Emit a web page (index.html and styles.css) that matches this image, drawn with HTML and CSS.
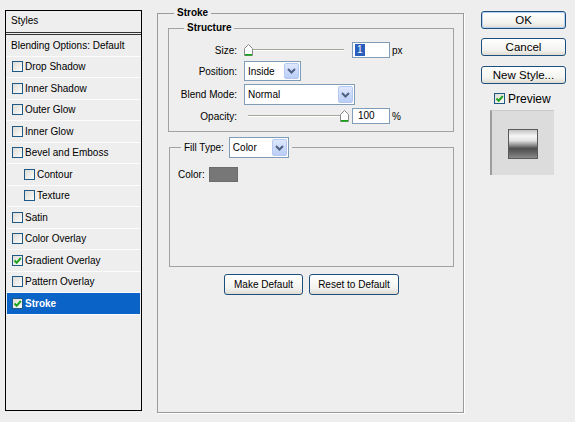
FILE: index.html
```html
<!DOCTYPE html>
<html>
<head>
<meta charset="utf-8">
<title>Layer Style - Stroke</title>
<link rel="stylesheet" href="styles.css">
</head>
<body>
<div class="dialog">
  <div class="styles-list">
    <div class="list-head">Styles</div>
    <div class="row">Blending Options: Default</div>
    <div class="row"><span class="cb"></span>Drop Shadow</div>
    <div class="row"><span class="cb"></span>Inner Shadow</div>
    <div class="row"><span class="cb"></span>Outer Glow</div>
    <div class="row"><span class="cb"></span>Inner Glow</div>
    <div class="row"><span class="cb"></span>Bevel and Emboss</div>
    <div class="row sub"><span class="cb"></span>Contour</div>
    <div class="row sub"><span class="cb"></span>Texture</div>
    <div class="row"><span class="cb"></span>Satin</div>
    <div class="row"><span class="cb"></span>Color Overlay</div>
    <div class="row"><span class="cb on"><svg viewBox="0 0 9 9" width="9" height="9"><path d="M1.5 4.5 L3.7 6.8 L7.8 2" fill="none" stroke="#1fa31f" stroke-width="2"/></svg></span>Gradient Overlay</div>
    <div class="row"><span class="cb"></span>Pattern Overlay</div>
    <div class="row sel"><span class="cb on"><svg viewBox="0 0 9 9" width="9" height="9"><path d="M1.5 4.5 L3.7 6.8 L7.8 2" fill="none" stroke="#1fa31f" stroke-width="2"/></svg></span>Stroke</div>
  </div>

  <fieldset class="group main">
    <legend class="main-legend">Stroke</legend>
    <div class="main-body">
      <fieldset class="group structure">
        <legend class="sub-legend">Structure</legend>
        <div class="form">
          <span class="lbl">Size:</span>
          <div class="ctl">
            <div class="slider">
              <span class="track"></span>
              <svg class="thumb at-min" viewBox="0 0 9 12" width="9" height="12"><path d="M4.5 0.5 L8.5 4.5 L8.5 11.5 L0.5 11.5 L0.5 4.5 Z" fill="#fff" stroke="#8a8a8a"/><path d="M1 10.8 H8" stroke="#17a317" stroke-width="1.6"/></svg>
            </div>
            <span class="field"><span class="hl">1</span></span>
            <span class="unit">px</span>
          </div>

          <span class="lbl">Position:</span>
          <div class="ctl">
            <span class="select pos"><span class="val">Inside</span><span class="drop"><svg viewBox="0 0 9 6" width="9" height="6"><path d="M1 1 L4.5 4.5 L8 1" fill="none" stroke="#4d6185" stroke-width="2"/></svg></span></span>
          </div>

          <span class="lbl">Blend Mode:</span>
          <div class="ctl">
            <span class="select blend"><span class="val">Normal</span><span class="drop"><svg viewBox="0 0 9 6" width="9" height="6"><path d="M1 1 L4.5 4.5 L8 1" fill="none" stroke="#4d6185" stroke-width="2"/></svg></span></span>
          </div>

          <span class="lbl">Opacity:</span>
          <div class="ctl">
            <div class="slider">
              <span class="track"></span>
              <svg class="thumb at-max" viewBox="0 0 9 12" width="9" height="12"><path d="M4.5 0.5 L8.5 4.5 L8.5 11.5 L0.5 11.5 L0.5 4.5 Z" fill="#fff" stroke="#8a8a8a"/><path d="M1 10.8 H8" stroke="#17a317" stroke-width="1.6"/></svg>
            </div>
            <span class="field">100</span>
            <span class="unit">%</span>
          </div>
        </div>
      </fieldset>

      <fieldset class="group fill">
        <legend class="fill-legend"><span class="fill-lbl">Fill Type:</span><span class="select ftype"><span class="val">Color</span><span class="drop"><svg viewBox="0 0 9 6" width="9" height="6"><path d="M1 1 L4.5 4.5 L8 1" fill="none" stroke="#4d6185" stroke-width="2"/></svg></span></span></legend>
        <div class="color-row"><span>Color:</span><span class="swatch"></span></div>
      </fieldset>

      <div class="actions">
        <button class="btn small">Make Default</button>
        <button class="btn small">Reset to Default</button>
      </div>
    </div>
  </fieldset>

  <div class="side">
    <button class="btn big default">OK</button>
    <button class="btn big">Cancel</button>
    <button class="btn big">New Style...</button>
    <div class="preview-check"><span class="cb on"><svg viewBox="0 0 9 9" width="9" height="9"><path d="M1.5 4.5 L3.7 6.8 L7.8 2" fill="none" stroke="#1fa31f" stroke-width="2"/></svg></span>Preview</div>
    <div class="preview-box"><span class="preview-swatch"></span></div>
  </div>
</div>
</body>
</html>
```

FILE: styles.css
```css
* { box-sizing: border-box; }

html, body {
  margin: 0;
  padding: 0;
  background: #eeeeee;
  font-family: "Liberation Sans", Arial, sans-serif;
  font-size: 10px;
  color: #000;
}

.dialog {
  display: flex;
  align-items: flex-start;
  width: 575px;
  height: 422px;
}

/* ---------- left list ---------- */
.styles-list {
  margin: 10px 0 0 5px;
  width: 137px;
  height: 401px;
  border: 1px solid #000;
  background: #eeeeee;
  display: flex;
  flex-direction: column;
}

.list-head {
  height: 24px;
  padding: 1px 0 3px 5px;
  display: flex;
  align-items: center;
  border-bottom: 3px double #333;
}

.row {
  height: 21.5px;
  flex: none;
  display: flex;
  align-items: center;
  padding-left: 5px;
  border-bottom: 1px solid #fbfbfb;
  white-space: nowrap;
}

.row .cb { margin: 0 2px 0 1px; }
.row.sub .cb { margin-left: 13px; }

.row.sel {
  background: #0a64c8;
  color: #fff;
  font-weight: bold;
  margin: 0 1px;
  padding-left: 4px;
}

.cb {
  width: 11px;
  height: 11px;
  flex: none;
  border: 1px solid #1f5a86;
  background: linear-gradient(135deg, #dedcd6, #fbfbf9);
  display: inline-flex;
  align-items: center;
  justify-content: center;
}
.cb svg { display: block; }

/* ---------- group boxes ---------- */
.group {
  margin: 0;
  padding: 0;
  border: 1px solid #a2a2a2;
  min-width: 0;
}

.main {
  margin: 7px 0 0 15px;
  width: 307px;
  height: 406px;
  border-color: #9a9a9a;
  box-shadow: 1px 1px 0 #ffffff;
}

.main-legend,
.sub-legend {
  padding: 0 3px;
  font-weight: bold;
  line-height: 12px;
  font-size: 10px;
}
.main-legend { margin-left: 16px; }
.sub-legend { margin-left: 15px; }

.main-body {
  padding: 3px 9px 0 10px;
}

.structure {
  height: 110px;
}

.form {
  display: grid;
  grid-template-columns: 68px 1fr;
  grid-template-rows: 16px 20px 21px 16px;
  column-gap: 7px;
  row-gap: 3px;
  padding-top: 8px;
}

.lbl {
  text-align: right;
  align-self: center;
  white-space: nowrap;
}

.ctl {
  display: flex;
  align-items: center;
}

.slider {
  position: relative;
  width: 106px;
  height: 16px;
  flex: none;
}
.track {
  position: absolute;
  left: 4px;
  right: 6px;
  top: 7px;
  height: 2px;
  border-top: 1px solid #a7a69c;
  border-bottom: 1px solid #ffffff;
}
.thumb {
  position: absolute;
  top: 2px;
}
.thumb.at-min { left: 0; }
.thumb.at-max { left: 96px; }

.field {
  margin-left: 2px;
  width: 38px;
  height: 16px;
  border: 1px solid #7f9db9;
  background: #fff;
  padding-left: 5px;
  display: flex;
  align-items: center;
  line-height: 12px;
}
.hl {
  background: #2a5fbd;
  color: #fff;
  padding: 0 2px;
  margin-left: -3px;
}
.unit { margin-left: 2px; }

.select {
  height: 100%;
  display: flex;
  align-items: center;
  justify-content: space-between;
  border: 1px solid #7f9db9;
  background: #fff;
  padding: 1px 1px 1px 3px;
}
.select.pos { width: 57px; height: 20px; }
.select.blend { width: 111px; height: 21px; }
.select.ftype { width: 60px; height: 21px; font-size: 10px; font-weight: normal; }

.drop {
  width: 15px;
  height: 100%;
  border: 1px solid #b5c8f2;
  border-radius: 2px;
  background: linear-gradient(#dfe8fd, #b9cdf6);
  display: flex;
  align-items: center;
  justify-content: center;
}
.drop svg { display: block; }

.fill {
  margin-top: 5px;
  margin-left: 1px;
  height: 130px;
}
.fill-legend {
  margin-left: 11px;
  padding: 0 3px;
  display: flex;
  align-items: center;
  height: 21px;
}
.fill-lbl { margin-right: 5px; }

.color-row {
  display: flex;
  align-items: center;
  gap: 4px;
  padding: 9px 0 0 8px;
}
.swatch {
  width: 29px;
  height: 15px;
  background: #777777;
  border: 1px solid #6c6c6c;
}

.actions {
  display: flex;
  justify-content: center;
  gap: 6px;
  margin-top: 7px;
  padding-left: 1px;
}

/* ---------- buttons ---------- */
.btn {
  font-family: "Liberation Sans", Arial, sans-serif;
  color: #000;
  border: 1px solid #1d4f7e;
  border-radius: 3px;
  background: linear-gradient(#ffffff, #f2f2ee 70%, #dedbd2);
  padding: 0;
  margin: 0;
  cursor: default;
  white-space: nowrap;
}
.btn.small {
  height: 21px;
  font-size: 10px;
  padding: 0;
}
.btn.small:first-child { width: 79px; }
.btn.small:last-child { width: 90px; }

.side {
  margin: 11px 0 0 17px;
  width: 85px;
  display: flex;
  flex-direction: column;
  align-items: flex-start;
}
.btn.big {
  width: 85px;
  height: 18px;
  font-size: 11.5px;
  line-height: 14px;
  margin-bottom: 9px;
}
.btn.big:nth-child(2) { margin-bottom: 10px; }
.btn.default {
  box-shadow: inset 0 0 0 1px #b8d0f2;
}

.preview-check {
  margin: -1px 0 0 13px;
  display: flex;
  align-items: center;
  gap: 3px;
  font-size: 12px;
  height: 13px;
}

.preview-box {
  margin: 5px 0 0 9px;
  width: 64px;
  height: 65px;
  background: #dcdcdc;
  border-left: 2px solid #9d9d9d;
  border-top: 1px solid #c9c9c9;
  display: flex;
  align-items: center;
  justify-content: center;
  padding-top: 2px;
}
.preview-swatch {
  width: 30px;
  height: 30px;
  border: 1px solid #5a5a5a;
  background: linear-gradient(#c4c4c4 0%, #f6f6f6 22%, #e2e2e2 38%, #9a9a9a 52%, #4e4e4e 66%, #666 82%, #8a8a8a 100%);
}
```
